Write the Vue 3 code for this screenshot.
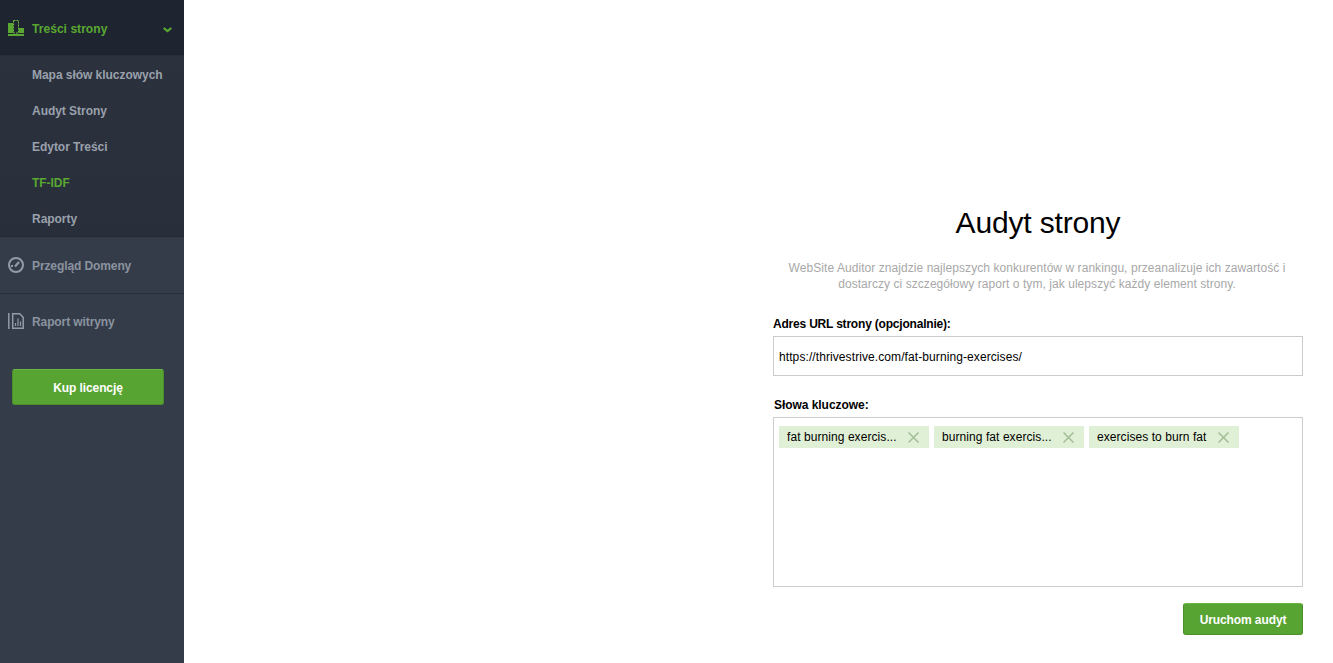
<script setup>
const subItems = [
  { label: 'Mapa słów kluczowych' },
  { label: 'Audyt Strony' },
  { label: 'Edytor Treści' },
  { label: 'TF-IDF', active: true },
  { label: 'Raporty' }
]
const tags = ['fat burning exercis...', 'burning fat exercis...', 'exercises to burn fat']
</script>

<template>
  <div class="page">
    <aside class="sidebar">
      <div class="head">
        <svg class="icon" width="16" height="16" viewBox="0 0 16 16">
          <path fill="#5aa832" d="M0 3h5v10H0zM11 8h5v5h-5zM0 14h16v2H0z" />
          <path fill="none" stroke="#6cbf40" stroke-dasharray="2 1" d="M5.500.500h5v12.500h-5z" />
        </svg>
        <span class="head-label">Treści strony</span>
        <svg class="chev" width="9" height="6" viewBox="0 0 9 6">
          <path fill="none" stroke="#5aa832" stroke-width="2.200" d="M.7 1l3.800 3L8.300 1" />
        </svg>
      </div>
      <nav class="sub">
        <a v-for="i in subItems" :key="i.label" class="sub-item" :class="{ active: i.active }">{{ i.label }}</a>
      </nav>
      <div class="main-item first">
        <svg class="icon" width="16" height="16" viewBox="0 0 16 16" fill="none" stroke="#939ba7">
          <circle cx="8" cy="8" r="7" stroke-width="2" />
          <path stroke-width="2.200" d="M7 9.500l4-4.500" />
          <path stroke-width="1.800" d="M3 9h2" />
        </svg>
        <span>Przegląd Domeny</span>
      </div>
      <div class="main-item second">
        <svg class="icon" width="16" height="16" viewBox="0 0 16 16" fill="none" stroke="#939ba7">
          <path stroke-width="1.500" d="M.8 0v16" />
          <path stroke-width="1.500" d="M4.700.8h7l3.500 3.500v10.900H4.700z" />
          <path stroke-width="1.200" d="M7.500 13v-3M10 13V5.500M12.500 13V8.500" />
        </svg>
        <span>Raport witryny</span>
      </div>
      <button class="btn buy">Kup licencję</button>
    </aside>

    <main class="main">
      <section class="panel">
        <h1 class="title">Audyt strony</h1>
        <p class="desc">WebSite Auditor znajdzie najlepszych konkurentów w rankingu, przeanalizuje ich zawartość i dostarczy ci szczegółowy raport o tym, jak ulepszyć każdy element strony.</p>
        <label class="label">Adres URL strony (opcjonalnie):</label>
        <div class="url">https://thrivestrive.com/fat-burning-exercises/</div>
        <label class="label kw">Słowa kluczowe:</label>
        <div class="tags">
          <span v-for="t in tags" :key="t" class="tag">
            <span class="tag-text">{{ t }}</span>
            <svg width="11" height="11" viewBox="0 0 11 11">
              <path fill="none" stroke="#a3bd97" stroke-width="1.500" d="M.5.500l10 10M10.500.500l-10 10" />
            </svg>
          </span>
        </div>
        <div class="actions">
          <button class="btn run">Uruchom audyt</button>
        </div>
      </section>
    </main>
  </div>
</template>

<style>
html, body { margin: 0; background: #fff; }
</style>

<style scoped>
.page {
  display: flex;
  height: 663px;
  overflow: hidden;
  font-family: "Liberation Sans", Arial, sans-serif;
  font-size: 12px;
}
.sidebar {
  width: 184px;
  flex: none;
  background: #343c4a;
  font-weight: 700;
  color: #9aa1ac;
}
.head {
  box-sizing: border-box;
  height: 56px;
  display: flex;
  align-items: center;
  background: #1e2530;
  padding: 2px 0 0 8px;
  color: #5aa832;
  border-bottom: 1px solid #262d38;
}
.head .icon { margin: -1px 8px 0 0; }
.head-label { flex: 1; letter-spacing: .05px; }
.chev { margin-right: 12px; margin-top: 2px; }
.sub {
  height: 180px;
  background: linear-gradient(#2b313d, #282e3a);
  border-bottom: 1px solid #242a34;
  display: flex;
  flex-direction: column;
}
.sub-item {
  height: 36px;
  line-height: 38px;
  padding-left: 32px;
  letter-spacing: -.04px;
}
.sub-item.active { color: #5aa832; }
.main-item {
  box-sizing: border-box;
  display: flex;
  align-items: center;
  padding-left: 8px;
  height: 56px;
  color: #8b939f;
  letter-spacing: -.1px;
}
.main-item .icon { margin: -2px 8px 0 0; }
.main-item.first {
  height: 57px;
  padding-top: 2px;
  border-bottom: 1px solid #2a303b;
}
.btn {
  display: block;
  box-sizing: border-box;
  border: 1px solid #4a8f2a;
  border-top-color: #6ab844;
  border-radius: 3px;
  background: #58a432;
  color: #fff;
  font: 700 12px "Liberation Sans", Arial, sans-serif;
  letter-spacing: -.1px;
  padding: 1px 0 0;
}
.buy {
  width: 152px;
  height: 36px;
  margin: 19px 0 0 12px;
}
.main {
  flex: 1;
  display: flex;
  justify-content: flex-end;
  padding: 0 30px 0 0;
}
.panel {
  width: 530px;
  padding-top: 205px;
}
.title {
  margin: 0;
  font-size: 30px;
  line-height: 36px;
  font-weight: 400;
  letter-spacing: -.15px;
  text-align: center;
  color: #000;
}
.desc {
  box-sizing: border-box;
  margin: 19px auto 0;
  width: 510px;
  padding-right: 2px;
  text-align: center;
  line-height: 16px;
  letter-spacing: .06px;
  color: #a8a8a8;
}
.label {
  display: block;
  margin-top: 25px;
  font-weight: 700;
  line-height: 14px;
  letter-spacing: -.2px;
  color: #000;
}
.label.kw {
  margin-top: 22px;
  padding-left: 1px;
  letter-spacing: -.05px;
}
.url {
  box-sizing: border-box;
  height: 40px;
  margin-top: 5px;
  border: 1px solid #ccc;
  padding-left: 5px;
  line-height: 40px;
  letter-spacing: .09px;
  color: #000;
}
.tags {
  box-sizing: border-box;
  height: 170px;
  margin-top: 5px;
  border: 1px solid #ccc;
  padding: 8px 5px;
  display: flex;
  align-items: flex-start;
  gap: 5px;
}
.tag {
  display: flex;
  align-items: center;
  box-sizing: border-box;
  width: 150px;
  height: 22px;
  padding: 0 10px 0 8px;
  background: #e0f0d6;
  color: #000;
}
.tag-text { flex: 1; white-space: nowrap; letter-spacing: .07px; }
.actions {
  display: flex;
  justify-content: flex-end;
  margin-top: 16px;
}
.run {
  width: 120px;
  height: 32px;
}
</style>
